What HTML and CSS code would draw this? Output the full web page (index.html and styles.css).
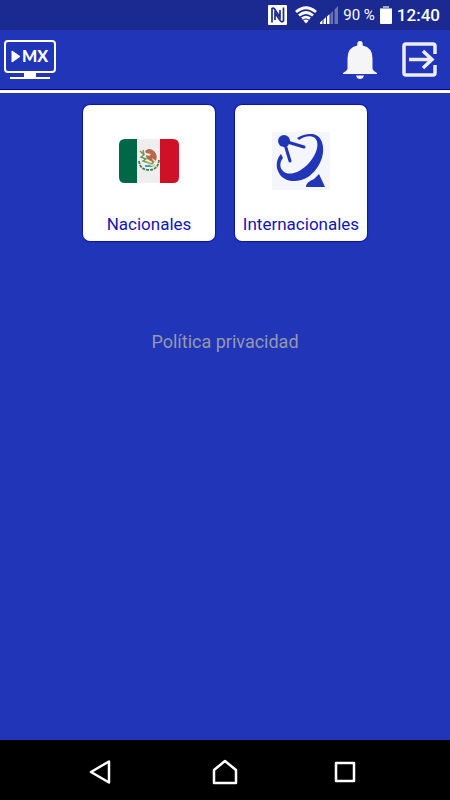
FILE: index.html
```html
<!DOCTYPE html>
<html lang="es">
<head>
<meta charset="utf-8">
<meta name="viewport" content="width=device-width, initial-scale=1">
<title>MX TV</title>
<link rel="stylesheet" href="styles.css">
</head>
<body>
<div class="status">
  <svg width="20" height="20" viewBox="0 0 20 20" aria-hidden="true">
    <rect x="1" width="19" height="20" rx="1" fill="#fff"/>
    <path d="M5 17.500V3.500Q6.500 2.500 7.500 4L13 12V5M8 15V8L13.500 16Q15 17.500 16.500 16V2.500" fill="none" stroke="#1a2a91" stroke-width="1.700"/>
  </svg>
  <svg class="wifi" width="22" height="18" viewBox="0 0 22 18" fill="none" stroke="#fff" stroke-width="2.800" aria-hidden="true">
    <path d="M1 6Q11-2.500 21 6M4 9.500Q11 3.500 18 9.500M7 12.700Q11 9.500 15 12.700"/>
    <path d="M8.300 14.600Q11 12.600 13.700 14.600L11 17.600Z" fill="#fff" stroke="none"/>
  </svg>
  <svg class="signal" width="18" height="18" viewBox="0 0 18 18" fill="#fff" aria-hidden="true">
    <path d="M0 18V16.500L2.500 14V18ZM3.500 18V13.500L6 11V18ZM7 18V10.500L9.500 8V18Z"/>
    <path d="M10.500 18V7.500L13 5V18ZM14.500 18V3.500L18 0V18Z" opacity=".35"/>
  </svg>
  <span class="charge">90 %</span>
  <svg class="battery" width="12" height="18" viewBox="0 0 12 18" aria-hidden="true">
    <path d="M3 0H9V2H12V4H0V2H3Z" fill="#9ca4cf"/>
    <rect y="3" width="12" height="15" rx="1" fill="#fff"/>
  </svg>
  <time class="clock">12:40</time>
</div>
<header class="bar">
  <svg width="52" height="40" viewBox="0 0 52 40" role="img" aria-label="MX">
    <rect x="1" y="1" width="50" height="31" rx="3" fill="none" stroke="#fff" stroke-width="2"/>
    <path d="M20 32H32V37H46V39H6V37H20Z" fill="#fff"/>
    <path d="M8 11L16 16.500L8 22Z" fill="#fff" stroke="#fff" stroke-linejoin="round"/>
    <text class="mark" x="18" y="22">MX</text>
  </svg>
  <div class="actions">
    <button type="button" aria-label="Notificaciones">
      <svg width="34" height="38" viewBox="0 0 34 38" fill="#f5f5f5" aria-hidden="true">
        <path d="M17 0Q19.700 0 19.700 3V4.400Q29.500 6.500 29.500 17V27Q29.500 29 31 30L34 32V33H0V32L3 30Q4.500 29 4.500 27V17Q4.500 6.500 14.300 4.400V3Q14.300 0 17 0Z"/>
        <path d="M13 34.500H21Q20 38 17 38T13 34.500Z"/>
      </svg>
    </button>
    <button type="button" aria-label="Salir">
      <svg width="36" height="36" viewBox="0 0 36 36" fill="none" stroke="#ececf2" stroke-width="3.500" aria-hidden="true">
        <path d="M33 12V4Q33 2 31 2H4Q2 2 2 4V31Q2 33 4 33H31Q33 33 33 31V23M7 17.500H29M21 9L30 17.500L21 26"/>
      </svg>
    </button>
  </div>
</header>
<main class="content">
  <nav class="cards">
    <a class="card" href="#nacionales">
      <span class="art">
        <svg width="62" height="44" viewBox="0 0 62 44" aria-hidden="true">
          <path d="M19 0V44H7Q1 44 1 38V6Q1 0 7 0Z" fill="#006847"/>
          <path d="M19 0H42V44H19Z" fill="#eee"/>
          <path d="M42 0H55Q61 0 61 6V38Q61 44 55 44H42Z" fill="#ce1126"/>
          <path d="M21 22Q22 31 31 31T41 21" fill="none" stroke="#3f8550" stroke-width="1.800" stroke-dasharray="3 1"/>
          <path d="M27 12Q31 8 36 12Q40 16 38 22L34 19L36 24L31 21Q28 20 28 16L31 17L33 15L28 14Z" fill="#b8674a"/>
          <path d="M22 12L26 16L23 18L28 20L25 22L34 25L36 22M25 11L26 16" fill="none" stroke="#669b54" stroke-width="1.400"/>
          <path d="M27 26H32L35 28H27Z" fill="#30a5dc"/>
          <path d="M29 23L33 24L31 26ZM34 27L37 25L36 28Z" fill="#e4b82d"/>
        </svg>
      </span>
      <span class="label">Nacionales</span>
    </a>
    <a class="card" href="#internacionales">
      <span class="art">
        <svg width="58" height="58" viewBox="0 0 58 58" aria-hidden="true">
          <rect width="58" height="58" fill="#f5f6fb"/>
          <g fill="#2135b8">
            <circle cx="12" cy="9" r="6"/>
            <path d="M25 6C34 1 45 0 49 8C55 20 48 37 36 45C25 52 10 50 6 39C3 32 6 25 9 22L11 26C7 31 8 36 11 39C17 45 29 40 37 31C45 22 48 11 43 6C39 3 32 4 27 8Z"/>
            <path d="M34 55Q34 50 42 47L47 42L53 55Z"/>
          </g>
          <path d="M12 9L32 15M12 9L18 29" fill="none" stroke="#2135b8" stroke-width="3" stroke-linecap="round"/>
        </svg>
      </span>
      <span class="label">Internacionales</span>
    </a>
  </nav>
  <a class="privacy" href="#privacidad">Política privacidad</a>
</main>
<footer class="system">
  <button type="button" aria-label="Atrás">
    <svg width="26" height="26" viewBox="0 0 26 26" aria-hidden="true"><path d="M-1 13L17 2.500V23.500Z"/></svg>
  </button>
  <button type="button" aria-label="Inicio">
    <svg width="26" height="26" viewBox="0 0 26 26" aria-hidden="true"><path d="M2 11L13 2L24 11V24H2Z"/></svg>
  </button>
  <button type="button" aria-label="Recientes">
    <svg width="26" height="26" viewBox="0 0 26 26" aria-hidden="true"><path d="M4 4H22V22H4Z"/></svg>
  </button>
</footer>
</body>
</html>
```
FILE: styles.css
```css
* {
  box-sizing: border-box;
}

body {
  margin: 0;
  min-height: 100vh;
  display: flex;
  flex-direction: column;
  background: #2135b8;
  font-family: Roboto, sans-serif;
  font-size: 17px;
}

svg {
  display: block;
  flex: none;
  overflow: visible;
}

button {
  padding: 0;
  border: 0;
  background: none;
  cursor: pointer;
}

a {
  text-decoration: none;
}

.status {
  height: 30px;
  display: flex;
  align-items: center;
  justify-content: flex-end;
  padding-right: 10px;
  background: #1a2a91;
  color: #fff;
}

.wifi {
  margin-left: 8px;
}

.signal {
  margin-left: 3px;
}

.charge {
  margin: 0 5px;
  font-size: 15px;
}

.clock {
  margin-left: 5px;
  font-weight: 500;
}

.bar {
  height: 60px;
  display: flex;
  align-items: center;
  justify-content: space-between;
  padding: 0 12px 0 4px;
  border-bottom: 1px solid #0000a8;
}

.mark {
  fill: #fff;
  font-family: Lato, sans-serif;
  font-size: 16px;
  font-weight: 900;
}

.actions {
  display: flex;
  align-items: center;
  gap: 25px;
}

.content {
  flex: 1;
  display: flex;
  flex-direction: column;
  align-items: center;
  gap: 91px;
  padding-top: 12px;
  border-top: 3px solid #fff;
}

.cards {
  display: flex;
  gap: 20px;
}

.card {
  width: 132px;
  height: 136px;
  display: flex;
  flex-direction: column;
  align-items: center;
  padding-bottom: 6px;
  border-radius: 7px;
  background: #fff;
  color: #1414b4;
  box-shadow: 0 0 1px 1px #0c14ac;
}

.art {
  flex: 1;
  display: flex;
  align-items: center;
  padding-top: 4px;
}

.label {
  line-height: 22px;
}

.privacy {
  font-size: 18px;
  line-height: 20px;
  color: #9498ac;
}

.system {
  height: 60px;
  display: flex;
  align-items: center;
  justify-content: center;
  gap: 94px;
  padding-top: 4px;
  background: #000;
}

.system path {
  fill: none;
  stroke: #fff;
  stroke-width: 2.5;
  stroke-linejoin: round;
}
```
